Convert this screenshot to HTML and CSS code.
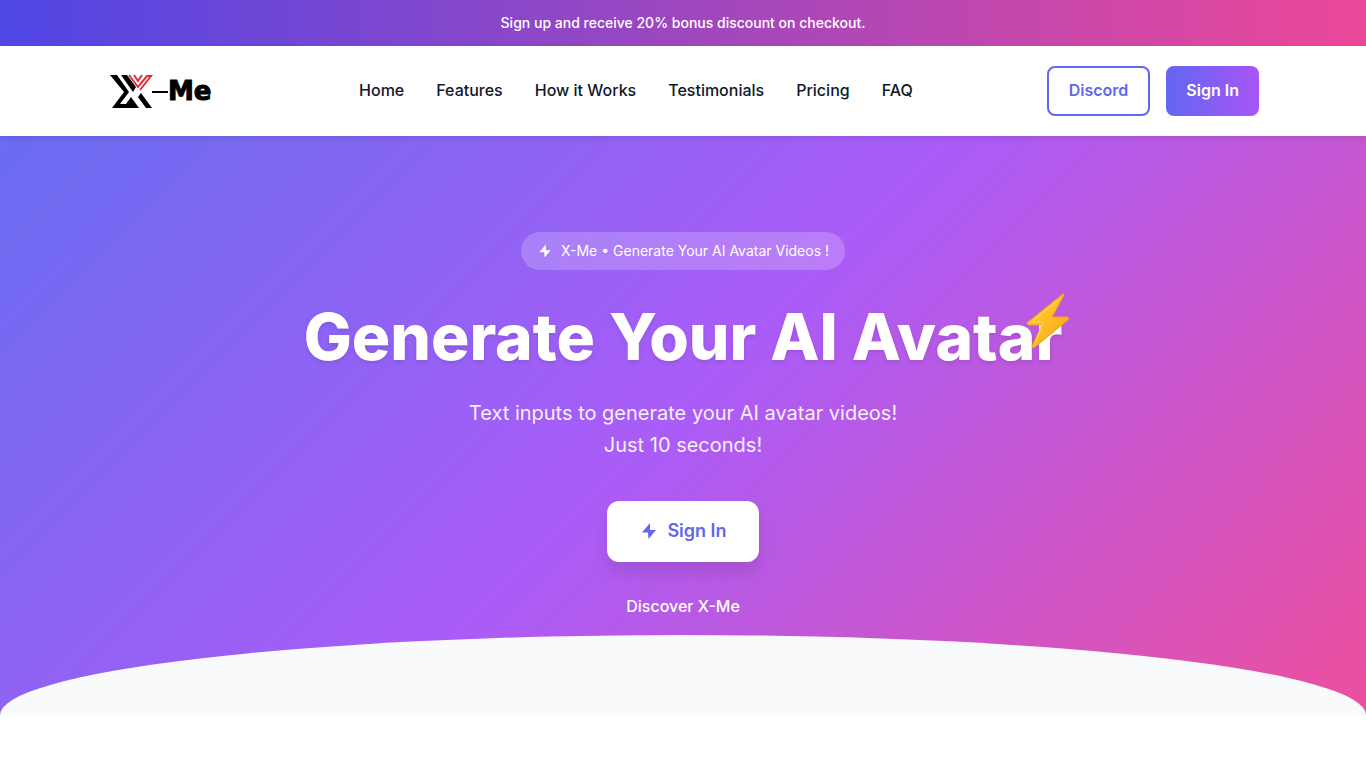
FILE: index.html
```html
<!DOCTYPE html>
<html lang="en">
<head>
    <meta charset="UTF-8">
    <meta name="viewport" content="width=device-width, initial-scale=1.0">
    <title>X-Me</title>
    <link rel="stylesheet" href="styles.css">
</head>
<body>
    <div class="banner">Sign up and receive 20% bonus discount on checkout.</div>

    <header class="header">
        <div class="container header-inner">
            <a href="#" class="logo" aria-label="X-Me">
                <svg width="118" height="48" viewBox="0 1 118 48">
                    <path d="M3 9H10L22 26L13 38H19L24 31L32 42H5L17 26Z"/>
                    <path d="M14 9H20L29 21L26 26Z"/>
                    <path d="M31 31L34 27L45 42H39Z"/>
                    <path class="logo-red" d="M22 9L31 21L40 10H44L33 24"/>
                    <path class="logo-red" d="M27 9L31 15L35 9"/>
                    <rect x="45" y="25" width="16" height="2"/>
                    <text x="61" y="34">Me</text>
                </svg>
            </a>
            <nav class="nav">
                <a href="#home">Home</a>
                <a href="#features">Features</a>
                <a href="#how">How it Works</a>
                <a href="#testimonials">Testimonials</a>
                <a href="#pricing">Pricing</a>
                <a href="#faq">FAQ</a>
            </nav>
            <div class="header-actions">
                <a href="#" class="btn btn-outline">Discord</a>
                <a href="#" class="btn btn-primary">Sign In</a>
            </div>
        </div>
    </header>

    <section class="hero" id="home">
        <div class="container hero-inner">
            <div class="badge">
                <svg class="badge-icon" viewBox="0 0 20 20"><path d="M11 2L3 11.500H9L9.500 18L17 9H11Z"/></svg>
                <span>X-Me • Generate Your AI Avatar Videos !</span>
            </div>
            <h1>
                Generate Your AI Avatar
                <svg class="bolt" viewBox="0 0 48 60">
                    <defs>
                        <linearGradient id="boltFill" x1="0" y1="0" x2="1" y2="1">
                            <stop offset="0" stop-color="#ffca28"/>
                            <stop offset="0.5" stop-color="#fdbe25"/>
                            <stop offset="1" stop-color="#f79a1e"/>
                        </linearGradient>
                    </defs>
                    <path d="M41 4L6 32Q4 35 7 35H20L10 56Q10 59 13 57L46 30Q48 27 45 27H30L42 5Q42 3 41 4Z" fill="url(#boltFill)" stroke="#f4a01f" stroke-width="1"/>
                    <path d="M37 9L10 32H21L14 51" fill="none" stroke="#ffdc5a" stroke-width="1"/>
                </svg>
            </h1>
            <p class="lead">Text inputs to generate your AI avatar videos!<br>Just 10 seconds!</p>
            <a href="#" class="btn-hero">
                <svg class="btn-icon" viewBox="0 0 20 20"><path d="M11 2L3 11.500H9L9.500 18L17 9H11Z"/></svg>
                Sign In
            </a>
            <a href="#features" class="discover">Discover X-Me</a>
        </div>
    </section>
</body>
</html>
```
FILE: styles.css
```css
* { margin: 0; padding: 0; box-sizing: border-box; }

body { font-family: Inter, sans-serif; font-size: 16px; line-height: 1.6; color: #0f172a; background-color: #fff; }
a { color: inherit; text-decoration: none; }

.container { max-width: 1200px; margin: 0 auto; padding: 0 24px; }

.banner { padding: 12px 24px; background: linear-gradient(90deg, #4f46e5, #ec4899); color: #fff; font-size: 14px; font-weight: 500; text-align: center; }

/* Header */
.header { position: relative; z-index: 1; background-color: #fff; box-shadow: 0 2px 6px rgba(0, 0, 0, 0.1); }
.header-inner { display: flex; justify-content: space-between; align-items: center; padding-top: 20px; padding-bottom: 20px; }
.logo svg { display: block; }
.logo text { font-family: "DejaVu Sans", sans-serif; font-size: 26px; font-weight: bold; stroke: #000; stroke-width: 1; }
.logo-red { fill: none; stroke: #dc2f3a; stroke-width: 2; }
.nav { display: flex; gap: 32px; font-weight: 500; }
.header-actions { display: flex; gap: 16px; }

.btn { padding: 12px 20px; border-radius: 8px; font-weight: 600; }
.btn-outline { padding: 10px 20px; border: 2px solid #6366f1; color: #6366f1; }
.btn-primary { background: linear-gradient(90deg, #6366f1, #a855f7); color: #fff; }

/* Hero */
.hero { position: relative; padding: 96px 0; background: linear-gradient(135deg, #696cf1, #ab5cf7 50%, #ed4f9d); color: #fff; }
.hero::after { content: ""; position: absolute; left: 0; right: 0; bottom: 0; height: 80px; background-color: #f8fafc; border-radius: 50% 50% 0 0 / 100% 100% 0 0; }
.hero-inner { display: flex; flex-direction: column; align-items: center; text-align: center; }

.badge { display: flex; align-items: center; gap: 8px; padding: 8px 16px; border-radius: 50px; background-color: rgba(255, 255, 255, 0.2); font-size: 14px; }
.badge-icon { width: 16px; height: 16px; fill: #fff; }

h1 { position: relative; margin: 32px 0 24px; font-size: 64px; line-height: 1.1; font-weight: 800; text-shadow: 0 2px 4px rgba(0, 0, 0, 0.1); }
.bolt { position: absolute; top: -12px; right: -8px; width: 48px; height: 60px; }

.lead { font-size: 20px; opacity: 0.9; }

.btn-hero { display: flex; align-items: center; gap: 8px; margin: 40px 0 32px; padding: 16px 32px; border-radius: 12px; background-color: #fff; color: #6366f1; font-size: 18px; font-weight: 600; box-shadow: 0 10px 15px rgba(0, 0, 0, 0.1); }
.btn-icon { width: 20px; height: 20px; fill: #6366f1; }

.discover { font-weight: 500; }
```
